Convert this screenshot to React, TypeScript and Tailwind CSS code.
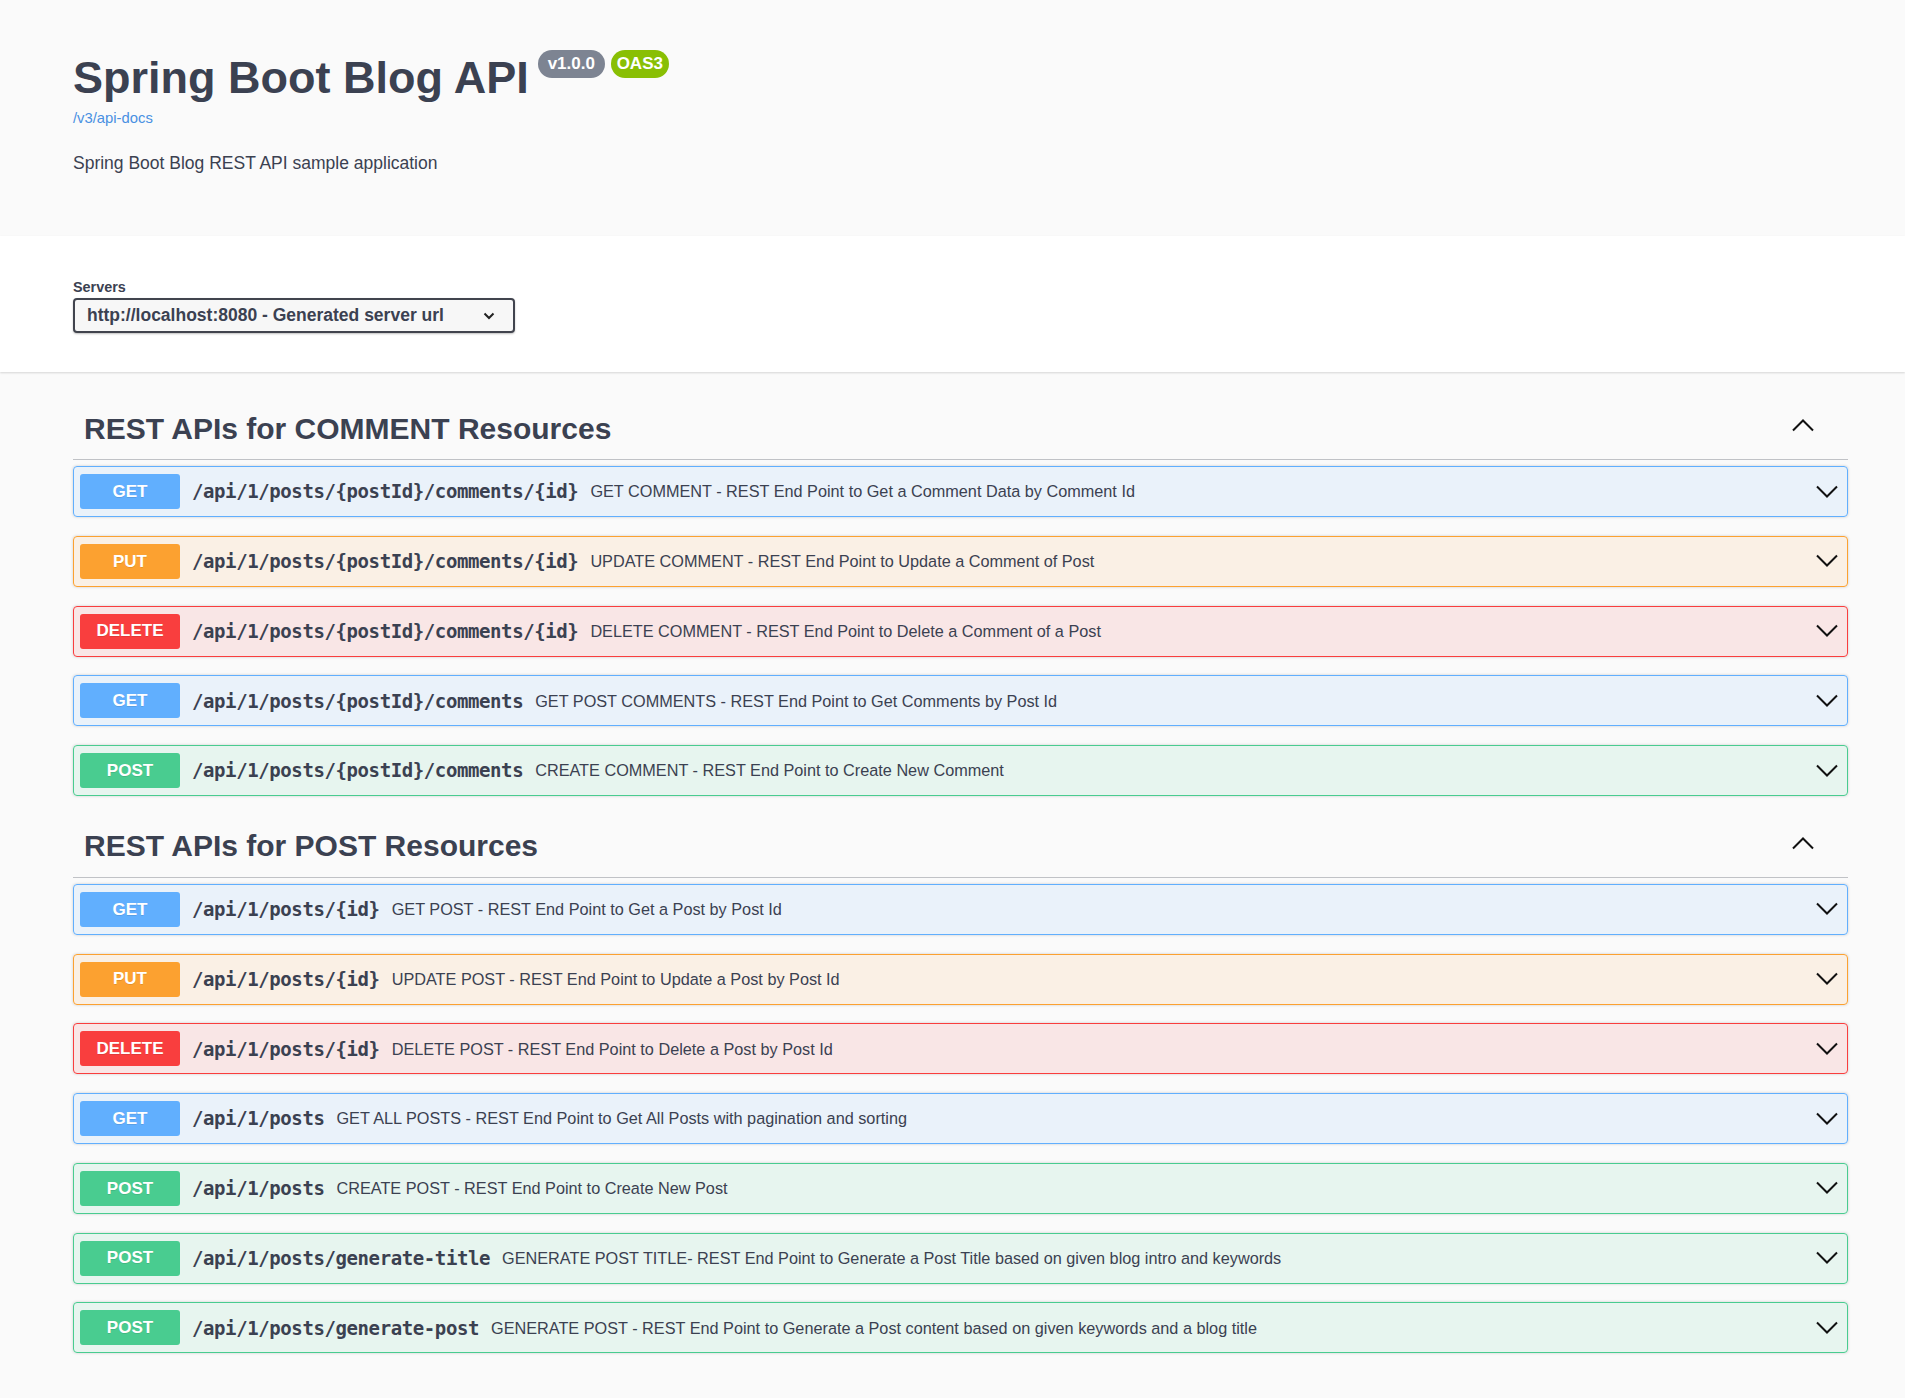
import React from 'react';

type Method = 'GET' | 'PUT' | 'DELETE' | 'POST';

interface Operation {
  method: Method;
  path: string;
  summary: string;
}

interface Tag {
  name: string;
  operations: Operation[];
}

const methodStyles: Record<Method, { block: string; badge: string }> = {
  GET: { block: 'border-[#61affe] bg-[#61affe]/10', badge: 'bg-[#61affe]' },
  PUT: { block: 'border-[#fca130] bg-[#fca130]/10', badge: 'bg-[#fca130]' },
  DELETE: { block: 'border-[#f93e3e] bg-[#f93e3e]/10', badge: 'bg-[#f93e3e]' },
  POST: { block: 'border-[#49cc90] bg-[#49cc90]/10', badge: 'bg-[#49cc90]' },
};

const tags: Tag[] = [
  {
    name: 'REST APIs for COMMENT Resources',
    operations: [
      { method: 'GET', path: '/api/1/posts/{postId}/comments/{id}', summary: 'GET COMMENT - REST End Point to Get a Comment Data by Comment Id' },
      { method: 'PUT', path: '/api/1/posts/{postId}/comments/{id}', summary: 'UPDATE COMMENT - REST End Point to Update a Comment of Post' },
      { method: 'DELETE', path: '/api/1/posts/{postId}/comments/{id}', summary: 'DELETE COMMENT - REST End Point to Delete a Comment of a Post' },
      { method: 'GET', path: '/api/1/posts/{postId}/comments', summary: 'GET POST COMMENTS - REST End Point to Get Comments by Post Id' },
      { method: 'POST', path: '/api/1/posts/{postId}/comments', summary: 'CREATE COMMENT - REST End Point to Create New Comment' },
    ],
  },
  {
    name: 'REST APIs for POST Resources',
    operations: [
      { method: 'GET', path: '/api/1/posts/{id}', summary: 'GET POST - REST End Point to Get a Post by Post Id' },
      { method: 'PUT', path: '/api/1/posts/{id}', summary: 'UPDATE POST - REST End Point to Update a Post by Post Id' },
      { method: 'DELETE', path: '/api/1/posts/{id}', summary: 'DELETE POST - REST End Point to Delete a Post by Post Id' },
      { method: 'GET', path: '/api/1/posts', summary: 'GET ALL POSTS - REST End Point to Get All Posts with pagination and sorting' },
      { method: 'POST', path: '/api/1/posts', summary: 'CREATE POST - REST End Point to Create New Post' },
      { method: 'POST', path: '/api/1/posts/generate-title', summary: 'GENERATE POST TITLE- REST End Point to Generate a Post Title based on given blog intro and keywords' },
      { method: 'POST', path: '/api/1/posts/generate-post', summary: 'GENERATE POST - REST End Point to Generate a Post content based on given keywords and a blog title' },
    ],
  },
];

const ArrowDown = () => (
  <svg width="24" height="14" viewBox="0 0 24 14" fill="none">
    <polyline points="2,1.5 12,11.5 22,1.5" stroke="#111" strokeWidth="2" />
  </svg>
);

const ArrowUp = () => (
  <svg width="24" height="14" viewBox="0 0 24 14" fill="none">
    <polyline points="2,12.5 12,2.5 22,12.5" stroke="#111" strokeWidth="2" />
  </svg>
);

const OperationRow: React.FC<{ op: Operation }> = ({ op }) => {
  const s = methodStyles[op.method];
  return (
    <div className={`mb-[18.75px] flex h-[51px] items-center rounded-[4px] border pl-[6px] shadow-[0_0_3px_rgba(0,0,0,0.19)] ${s.block}`}>
      <span className={`flex h-[35px] w-[100px] shrink-0 items-center justify-center rounded-[3px] text-[17px] font-bold text-white [text-shadow:0_1px_0_rgba(0,0,0,0.1)] ${s.badge}`}>
        {op.method}
      </span>
      <span className="px-[12px] font-['DejaVu_Sans_Mono',monospace] text-[19px] font-bold tracking-[-0.4px] text-[#3b4151]">
        {op.path}
      </span>
      <span className="text-[16.25px] text-[#3b4151]">{op.summary}</span>
      <span className="ml-auto mr-[8px] flex items-center">
        <ArrowDown />
      </span>
    </div>
  );
};

export default function App() {
  return (
    <div className="min-h-screen w-full bg-[#fafafa] font-['Liberation_Sans',Arial,sans-serif] text-[#3b4151]">
      {/* Info */}
      <div className="ml-[73px] w-[1775px] pt-[50px]">
        <div className="flex items-start">
          <h1 className="mt-[3px] text-[45px] font-bold leading-[50px] text-[#3b4151]">Spring Boot Blog API</h1>
          <div className="ml-[9px] flex gap-[6px]">
            <span className="flex h-[28px] w-[67px] items-center justify-center rounded-full bg-[#7d8492] text-[17px] font-bold text-white">v1.0.0</span>
            <span className="flex h-[28px] w-[58px] items-center justify-center rounded-full bg-[#89bf04] text-[17px] font-bold text-white">OAS3</span>
          </div>
        </div>
        <a className="mt-[7px] block h-[17px] w-fit text-[14.8px] leading-[17px] text-[#4990e2]">/v3/api-docs</a>
        <p className="mt-[26px] text-[17.5px] leading-[20px]">Spring Boot Blog REST API sample application</p>
      </div>

      {/* Servers */}
      <div className="mt-[63px] w-full bg-white pb-[39px] pt-[43px] shadow-[0_1px_2px_0_rgba(0,0,0,0.15)]">
        <div className="ml-[73px] w-[1775px]">
          <div className="h-[17px] text-[14.4px] font-bold leading-[17px]">Servers</div>
          <div className="mt-[2px] flex h-[35px] w-[442px] items-center justify-between rounded-[4px] border-2 border-[#41444e] bg-[#f7f7f7] pl-[12px] pr-[18px] shadow-[0_1px_2px_0_rgba(0,0,0,0.25)]">
            <span className="text-[17.5px] font-bold text-[#3b4151]">http://localhost:8080 - Generated server url</span>
            <svg width="12" height="8" viewBox="0 0 12 8" fill="none">
              <polyline points="1.5,1.5 6,6 10.5,1.5" stroke="#222" strokeWidth="2" />
            </svg>
          </div>
        </div>
      </div>

      {/* Operations */}
      <div className="ml-[73px] w-[1775px] pt-[25px] pb-[26px]">
        {tags.map((tag) => (
          <div key={tag.name}>
            <div className="mb-[6px] flex h-[63px] items-center border-b border-[#3b4151]/30 pl-[11px]">
              <h3 className="text-[30px] font-bold text-[#3b4151]">{tag.name}</h3>
              <span className="mb-[6px] ml-auto mr-[33px] flex items-center">
                <ArrowUp />
              </span>
            </div>
            {tag.operations.map((op, i) => (
              <OperationRow key={i} op={op} />
            ))}
          </div>
        ))}
      </div>
    </div>
  );
}
